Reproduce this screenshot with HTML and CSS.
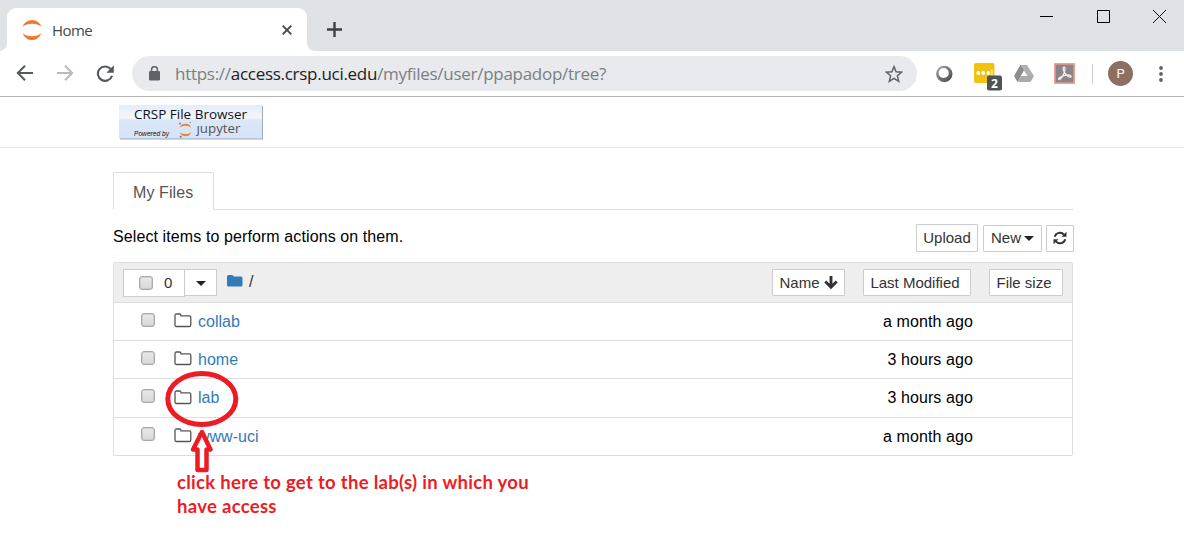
FILE: index.html
```html
<!DOCTYPE html>
<html lang="en">
<head>
<meta charset="utf-8">
<title>Home</title>
<link rel="stylesheet" href="styles.css">
</head>
<body>
<div class="tabstrip">
  <div class="browser-tab">
    <svg class="favicon" width="20" height="20" viewBox="0 0 20 20" fill="#f37726"><path d="M.6 6.6Q3.4 0 10 0t9.4 6.6Q16 3.7 10 3.7T.6 6.6zM.6 13.2Q3.4 20 10 20t9.4-6.800Q16 16.200 10 16.200T.6 13.200z"/></svg>
    <span class="tab-title">Home</span>
    <svg class="tab-close" width="10" height="10" viewBox="0 0 10 10" stroke="#45494d" stroke-width="1.9"><path d="M.7.7l8.600 8.600M9.300.7L.7 9.300"/></svg>
    <svg class="tab-foot" width="8" height="8"><path d="M0 0v8h8a8 8 0 0 1-8-8z" fill="#fff"/></svg>
    <svg class="tab-foot-left" width="7" height="8"><path d="M7 0v8H0a8 8 0 0 0 7-8z" fill="#fff"/></svg>
  </div>
  <svg class="new-tab" width="15" height="15" viewBox="0 0 15 15" stroke="#3c4043" stroke-width="2.4"><path d="M7.500 0v15M0 7.500h15"/></svg>
  <div class="window-controls">
    <svg width="13" height="13"><path d="M0 6.500h13" stroke="#000"/></svg>
    <svg width="13" height="13"><path d="M.5.5h12v12H.5z" fill="none" stroke="#000"/></svg>
    <svg width="13" height="13"><path d="M0 0l13 13M13 0L0 13" stroke="#111"/></svg>
  </div>
</div>
<div class="toolbar">
  <div class="nav">
    <svg width="18" height="16" viewBox="0 0 18 16" fill="none" stroke="#55595e" stroke-width="2"><path d="M17 8H2M9 .8L1.800 8 9 15.200"/></svg>
    <svg width="18" height="16" viewBox="0 0 18 16" fill="none" stroke="#b9babd" stroke-width="2"><path d="M1 8h15M9 .8L16.200 8 9 15.200"/></svg>
    <svg width="18" height="17" viewBox="0 0 18 17"><path d="M14.600 4A7.200 7.200 0 1 0 16 10.800" fill="none" stroke="#55595e" stroke-width="2.100"/><path d="M17.800.3v7.500h-7.500z" fill="#55595e"/></svg>
  </div>
  <div class="omnibox">
    <svg class="lock" width="11" height="15" viewBox="0 0 11 15"><rect y="5" width="11" height="9.500" rx="1.200" fill="#5f6368"/><path d="M2.600 6V3.600a2.900 2.900 0 0 1 5.800 0V6" fill="none" stroke="#5f6368" stroke-width="1.500"/></svg>
    <span class="url">https://<b class="host">access.crsp.uci.edu</b>/myfiles/user/ppapadop/tree?</span>
    <svg class="star" width="18" height="18" viewBox="0 0 18 18"><path d="M9 1.600l2.100 5.200 5.500.4-4.200 3.600 1.300 5.500L9 13.400l-4.700 2.900 1.300-5.500L1.400 7.200l5.500-.4z" fill="none" stroke="#5f6368" stroke-width="1.500"/></svg>
  </div>
  <div class="extensions">
    <svg width="18" height="18" viewBox="0 0 18 18"><defs><linearGradient id="ring" x2="1" y2="1"><stop offset="0" stop-color="#aaa"/><stop offset=".5" stop-color="#777"/><stop offset="1" stop-color="#444"/></linearGradient></defs><circle cx="9.300" cy="9" r="8.200" fill="url(#ring)"/><circle cx="8.700" cy="8" r="5.100" fill="#fff"/></svg>
    <svg class="dots-ext" width="28" height="28" viewBox="0 0 28 28"><rect width="20.500" height="20" rx="2" fill="#f2c111"/><g fill="#fff"><circle cx="4.300" cy="10" r="1.900"/><circle cx="9.300" cy="10" r="1.900"/><circle cx="14.300" cy="10" r="1.900"/><path d="M17.400 6.500h1v6.500h-1z"/></g><rect x="13" y="12.500" width="15" height="15" rx="2" fill="#4e5354"/><text x="20.500" y="24.600" class="badge">2</text></svg>
    <svg width="20" height="17" viewBox="0 0 20 17"><path d="M6.400 0L13 0 7 11 3.500 17 0 11z" fill="#8d8d8d"/><path d="M6.400 0H13l7 11h-6.600z" fill="#b0b0b0"/><path d="M3.500 17L7 11h13l-3.500 6z" fill="#aaa"/><path d="M10 6l3 5H7z" fill="#fff"/></svg>
    <svg width="21" height="21" viewBox="0 0 21 21"><rect x=".8" y=".8" width="19.400" height="19.400" fill="#8b8585" stroke="#f0a095" stroke-width="1.600"/><path d="M9.600 4.200c2-.7 1.500 2.400.7 5-1 3.200-3.500 7.300-5.200 7.300-1.700-.8 1.300-3.300 6.200-4.200 3.500-.7 6 0 5.800 1.300-.8 1.600-4.700-1-6.300-3.700C9.300 7.200 8.500 4.800 9.600 4.200z" fill="none" stroke="#f2eeee" stroke-width="1.300"/></svg>
    <i class="divider"></i>
    <span class="avatar">P</span>
    <svg width="4" height="16" fill="#5f6368"><circle cx="2" cy="2" r="1.900"/><circle cx="2" cy="8" r="1.900"/><circle cx="2" cy="14" r="1.900"/></svg>
  </div>
</div>
<header class="page-header">
  <svg class="logo" width="145" height="36" viewBox="0 0 145 36">
    <defs><linearGradient id="glass" x2="0" y2="1"><stop offset="0" stop-color="#e2ecfa"/><stop offset=".38" stop-color="#f2f6fd"/><stop offset=".45" stop-color="#dbe7f9"/><stop offset="1" stop-color="#d5e3f8"/></linearGradient></defs>
    <path d="M1 1h143v33.500H1z" fill="#9fa9b8"/><path d="M0 0h143v33.500H0z" fill="url(#glass)"/>
    <text x="15" y="14" class="logo-title" textLength="113" lengthAdjust="spacingAndGlyphs">CRSP File Browser</text>
    <text x="15" y="31" class="logo-powered" textLength="35" lengthAdjust="spacingAndGlyphs">Powered by</text>
    <path d="M60.500 22.500q1.500-3.800 6-3.800t5.500 3.800q-2-1.700-5.700-1.700t-5.800 1.700zM60.500 27.200q1.500 4 6 4t5.500-4q-2 1.900-5.700 1.900t-5.800-1.900z" fill="#ef8038"/><g fill="#777"><circle cx="61" cy="18.500" r=".9"/><circle cx="71.200" cy="17.600" r=".7"/><circle cx="61.700" cy="31.800" r="1"/></g>
    <text x="77.500" y="28" class="logo-jupyter" textLength="44" lengthAdjust="spacingAndGlyphs">ȷupyter</text>
  </svg>
</header>
<main class="content">
  <div class="tabs"><div class="tab">My Files</div></div>
  <div class="actions">
    <p class="hint">Select items to perform actions on them.</p>
    <button class="btn upload">Upload</button>
    <button class="btn new">New <i class="caret"></i></button>
    <button class="btn refresh"><svg width="14" height="14" viewBox="0 0 14 14"><path d="M1.800 5.800A5.300 5.300 0 0 1 11 3.600M12.200 8.200A5.300 5.300 0 0 1 3 10.400" fill="none" stroke="#333" stroke-width="2"/><path d="M13.500.8v5H8.600zM.5 13.200v-5h4.900z" fill="#333"/></svg></button>
  </div>
  <section class="files">
    <div class="files-head">
      <div class="select-all"><i class="check"></i>0</div>
      <div class="select-menu"><i class="caret"></i></div>
      <div class="crumbs"><svg width="16" height="14" viewBox="0 0 16 14"><path d="M0 2.500Q0 1 1.500 1H5q1.500 0 1.500 1.500h7.500q1.500 0 1.500 1.500v7q0 1.500-1.500 1.500H1.500Q0 12.500 0 11z" fill="#337ab7"/></svg><span>/</span></div>
      <button class="btn name">Name <svg width="14" height="13" viewBox="0 0 14 13"><path d="M7 0v10M1.300 5.500L7 11.200l5.700-5.700" fill="none" stroke="#333" stroke-width="2.900"/></svg></button>
      <button class="btn modified">Last Modified</button>
      <button class="btn size">File size</button>
    </div>
    <div class="row"><i class="check"></i><svg class="folder" width="18" height="15" viewBox="0 0 18 15"><path d="M1 2.600Q1 1 2.600 1h2.800Q7 1 7 2.800h8.200q1.600 0 1.600 1.600v7.500q0 1.600-1.600 1.600H2.600Q1 13.500 1 11.900z"/></svg><a>collab</a><time>a month ago</time></div>
    <div class="row"><i class="check"></i><svg class="folder" width="18" height="15" viewBox="0 0 18 15"><path d="M1 2.600Q1 1 2.600 1h2.800Q7 1 7 2.800h8.200q1.600 0 1.600 1.600v7.500q0 1.600-1.600 1.600H2.600Q1 13.500 1 11.900z"/></svg><a>home</a><time>3 hours ago</time></div>
    <div class="row tall"><i class="check"></i><svg class="folder" width="18" height="15" viewBox="0 0 18 15"><path d="M1 2.600Q1 1 2.600 1h2.800Q7 1 7 2.800h8.200q1.600 0 1.600 1.600v7.500q0 1.600-1.600 1.600H2.600Q1 13.500 1 11.900z"/></svg><a>lab</a><time>3 hours ago</time></div>
    <div class="row last"><i class="check"></i><svg class="folder" width="18" height="15" viewBox="0 0 18 15"><path d="M1 2.600Q1 1 2.600 1h2.800Q7 1 7 2.800h8.200q1.600 0 1.600 1.600v7.500q0 1.600-1.600 1.600H2.600Q1 13.500 1 11.900z"/></svg><a>www-uci</a><time>a month ago</time></div>
    <svg class="markup" width="74" height="104" viewBox="0 0 74 104"><ellipse cx="36.800" cy="29" rx="34" ry="25.500" fill="none" stroke="#ed1c24" stroke-width="5"/><path d="M37 62L45.500 79.500H41.500v20.500h-9V79.500h-4.500z" fill="#fff" stroke="#ed1c24" stroke-width="4.500" stroke-linejoin="round"/></svg>
  </section>
  <p class="note">click here to get to the lab(s) in which you<br>have access</p>
</main>
</body>
</html>
```

FILE: styles.css
```css
* { box-sizing: border-box; }
body { margin: 0; background: #fff; font: 16px/22px "Liberation Sans", Arial, sans-serif; color: #000; overflow: hidden; }
svg { display: block; flex: none; }
button { font: inherit; }

.tabstrip { height: 51px; background: #dee1e6; display: flex; padding: 8px 18px 0 7px; }
.browser-tab { position: relative; width: 300px; height: 43px; background: #fff; border-radius: 9px 9px 0 0; display: flex; align-items: center; padding: 0 15px; }
.tab-title { flex: 1; margin-left: 10px; font: 15px/20px "Open Sans", sans-serif; letter-spacing: -.6px; color: #45484c; }
.tab-foot { position: absolute; left: 300px; bottom: 0; }
.tab-foot-left { position: absolute; left: -7px; bottom: 0; }
.new-tab { margin: 14px 0 0 20px; }
.window-controls { margin: 2px 0 0 auto; display: flex; gap: 43px 43.5px; }

.toolbar { height: 46px; border-bottom: 1px solid #b2b3b5; display: flex; padding-top: 5px; }
.nav { width: 132px; height: 35px; display: flex; align-items: center; gap: 22px; padding: 0 0 1px 15.5px; }
.omnibox { width: 785px; height: 35px; border-radius: 18px; background: #e8eaed; display: flex; align-items: center; padding: 0 14px 0 17px; }
.lock { margin-bottom: 1px; }
.url { flex: 1; margin-left: 15px; font: 17px/24px "Open Sans", sans-serif; letter-spacing: -.28px; color: #7b7f84; white-space: nowrap; }
.host { font-weight: 400; color: #202124; }
.extensions { height: 35px; display: flex; align-items: center; margin-left: 18px; }
.dots-ext { margin: 7px 12px 0 21px; }
.badge { font: 700 12px "Open Sans", sans-serif; fill: #fff; text-anchor: middle; }
.extensions svg:nth-child(4) { margin-left: 20px; }
.divider { width: 1px; height: 20px; background: #c8cacc; margin: 0 15px 0 17px; }
.avatar { width: 25px; height: 25px; margin-right: 26px; border-radius: 50%; background: #8d6e63; color: #fff; text-align: center; font: 13px/26px Roboto, sans-serif; }

.page-header { height: 51px; border-bottom: 1px solid #e7e7e7; padding: 8px 0 0 119px; }
.logo-title { font: 500 13px "Open Sans", sans-serif; fill: #111; }
.logo-powered { font: italic 7.5px "Liberation Sans", sans-serif; fill: #111; }
.logo-jupyter { font: 12px "Open Sans", sans-serif; fill: #555; }

.content { width: 960px; margin: 24px 0 0 113px; }
.tabs { height: 38px; border-bottom: 1px solid #ddd; }
.tab { width: 101px; height: 38px; border: 1px solid #ddd; border-bottom-color: #fff; border-radius: 2px 2px 0 0; background: #fff; color: #555; padding: 9px 19px; letter-spacing: .1px; white-space: nowrap; }
.actions { height: 52px; width: 961px; display: flex; align-items: flex-start; padding-top: 14px; }
.hint { margin: 2px auto 0 0; letter-spacing: .1px; }
.btn { height: 27px; padding: 0; border: 1px solid #ccc; border-radius: 1px; background: #fff; color: #333; font-size: 15px; line-height: 24px; display: flex; align-items: center; justify-content: center; gap: 4px; white-space: nowrap; }
.actions .btn { margin-top: 1px; }
.actions .upload { width: 62px; height: 28px; margin: 0 5px 0 0; }
.actions .new { width: 59px; margin-right: 4px; padding-bottom: 2px; gap: 3px; }
.refresh { width: 28px; }
.refresh svg { margin-bottom: 2px; }
.caret { border: 5px solid transparent; border-top-color: #222; border-bottom: 0; }
.select-menu .caret, .new .caret { margin-top: 2px; }

.files { position: relative; border: 1px solid #ddd; border-radius: 2px; }
.files-head { height: 40px; background: #eee; border-bottom: 1px solid #ddd; display: flex; padding: 6px 9px; }
.check { width: 14px; height: 14px; border: 1px solid #aaa; border-radius: 3px; background: linear-gradient(#e9e9e9, #d8d8d8); box-shadow: inset 0 0 0 .5px #bbb; flex: none; }
.select-all { width: 62px; height: 28px; border: 1px solid #ccc; background: #fff; display: flex; align-items: center; gap: 11px; padding-left: 15px; font-size: 15px; color: #333; }
.select-menu { width: 33px; height: 27px; margin-left: -1px; border: 1px solid #ccc; background: #fff; display: flex; align-items: center; justify-content: center; }
.crumbs { display: flex; margin: 5px auto 0 10px; gap: 6px; line-height: 15px; color: #333; }
.name { width: 73px; }
.modified { width: 108px; margin: 0 18px; padding-right: 4px; }
.size { width: 74px; padding-right: 4px; }
.row { height: 38px; border-bottom: 1px solid #ddd; display: flex; align-items: center; padding: 0 99px 0 27px; }
.row .check { margin-bottom: 3px; }
.tall { height: 39px; }
.tall .check { margin-bottom: 4px; }
.last { height: 37px; border: 0; }
.last .check { margin-bottom: 5px; }
.folder { margin: 0 6px 2px 19px; fill: none; stroke: #555; stroke-width: 1.3; }
.row a { color: #337ab7; }
.row time { margin-left: auto; letter-spacing: .1px; }
.markup { position: absolute; left: 51px; top: 107px; }
.note { margin: 14px 0 0 64px; font: 700 18.5px/24px Lato, sans-serif; letter-spacing: .3px; color: #ed1c24; white-space: nowrap; }
```
